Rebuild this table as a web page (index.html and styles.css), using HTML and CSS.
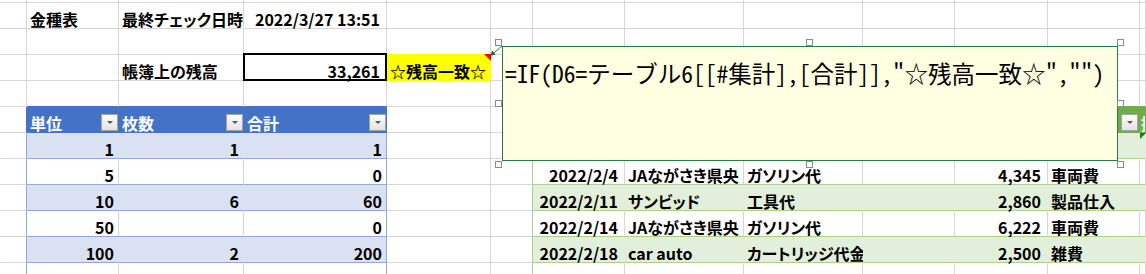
FILE: index.html
```html
<!DOCTYPE html>
<html lang="ja">
<head>
<meta charset="utf-8">
<title>金種表</title>
<link rel="stylesheet" href="styles.css">
</head>
<body>
<div class="sheet">
  <!-- row 0 (partial) -->
  <div class="c"></div><div class="c"></div><div class="c"></div><div class="c"></div><div class="c"></div><div class="c"></div><div class="c"></div><div class="c"></div><div class="c"></div><div class="c"></div><div class="c"></div><div class="c"></div><div class="c"></div>
  <!-- row 1 -->
  <div class="c"></div>
  <div class="c"><span>金種表</span></div>
  <div class="c"><span>最終チェック日時</span></div>
  <div class="c r r6"><span>2022/3/27 13:51</span></div>
  <div class="c"></div><div class="c"></div><div class="c"></div><div class="c"></div><div class="c"></div><div class="c"></div><div class="c"></div><div class="c"></div><div class="c"></div>
  <!-- row 2 -->
  <div class="c"></div><div class="c"></div><div class="c"></div><div class="c"></div>
  <div class="c yb"></div>
  <div class="c"></div><div class="c"></div><div class="c"></div><div class="c"></div><div class="c"></div><div class="c"></div><div class="c"></div><div class="c"></div>
  <!-- row 3 -->
  <div class="c"></div>
  <div class="c"></div>
  <div class="c"><span>帳簿上の残高</span></div>
  <div class="c r r6 bal"><span>33,261</span></div>
  <div class="c yel"><span>☆残高一致☆</span></div>
  <div class="c"></div><div class="c"></div><div class="c"></div><div class="c"></div><div class="c"></div><div class="c"></div><div class="c"></div><div class="c"></div>
  <!-- row 4 -->
  <div class="c"></div>
  <div class="c bt"></div><div class="c bt"></div><div class="c bt"></div>
  <div class="c"></div><div class="c"></div>
  <div class="c gt"></div><div class="c gt"></div><div class="c gt"></div><div class="c gt"></div><div class="c gt"></div><div class="c gt"></div><div class="c gt"></div>
  <!-- row 5: table headers -->
  <div class="c lah"></div>
  <div class="c bh"><span>単位</span><span class="dd"></span></div>
  <div class="c bh"><span>枚数</span><span class="dd"></span></div>
  <div class="c bh"><span>合計</span><span class="dd"></span></div>
  <div class="c"></div>
  <div class="c lgh"></div>
  <div class="c gh"><span>日付</span><span class="dd"></span></div>
  <div class="c gh"><span>支払先</span><span class="dd"></span></div>
  <div class="c gh"><span>内容</span><span class="dd"></span></div>
  <div class="c gh"><span>入金</span><span class="dd"></span></div>
  <div class="c gh"><span>出金</span><span class="dd"></span></div>
  <div class="c gh"><span>科目</span><span class="dd dd1"></span></div>
  <div class="c gh clip"><span>摘要</span></div>
  <!-- row 6 -->
  <div class="c la"></div>
  <div class="c bb r"><span>1</span></div>
  <div class="c bb r"><span>1</span></div>
  <div class="c bb bend r"><span>1</span></div>
  <div class="c"></div>
  <div class="c lg"></div>
  <div class="c gb"></div><div class="c gb"></div><div class="c gb"></div><div class="c gb"></div><div class="c gb"></div><div class="c gb"></div>
  <div class="c gb tri"></div>
  <!-- row 7 -->
  <div class="c la"></div>
  <div class="c bw r"><span>5</span></div>
  <div class="c bw"></div>
  <div class="c bw bend r"><span>0</span></div>
  <div class="c"></div>
  <div class="c lg"></div>
  <div class="c gw r r6"><span>2022/2/4</span></div>
  <div class="c gw"><span>JAながさき県央</span></div>
  <div class="c gw"><span>ガソリン代</span></div>
  <div class="c gw"></div>
  <div class="c gw r r6"><span>4,345</span></div>
  <div class="c gw"><span>車両費</span></div>
  <div class="c gw"></div>
  <!-- row 8 -->
  <div class="c la"></div>
  <div class="c bb r"><span>10</span></div>
  <div class="c bb r"><span>6</span></div>
  <div class="c bb bend r"><span>60</span></div>
  <div class="c"></div>
  <div class="c lg"></div>
  <div class="c gb r r6"><span>2022/2/11</span></div>
  <div class="c gb"><span>サンビッド</span></div>
  <div class="c gb"><span>工具代</span></div>
  <div class="c gb"></div>
  <div class="c gb r r6"><span>2,860</span></div>
  <div class="c gb"><span>製品仕入</span></div>
  <div class="c gb"></div>
  <!-- row 9 -->
  <div class="c la"></div>
  <div class="c bw r"><span>50</span></div>
  <div class="c bw"></div>
  <div class="c bw bend r"><span>0</span></div>
  <div class="c"></div>
  <div class="c lg"></div>
  <div class="c gw r r6"><span>2022/2/14</span></div>
  <div class="c gw"><span>JAながさき県央</span></div>
  <div class="c gw"><span>ガソリン代</span></div>
  <div class="c gw"></div>
  <div class="c gw r r6"><span>6,222</span></div>
  <div class="c gw"><span>車両費</span></div>
  <div class="c gw"></div>
  <!-- row 10 -->
  <div class="c la"></div>
  <div class="c bb r"><span>100</span></div>
  <div class="c bb r"><span>2</span></div>
  <div class="c bb bend r"><span>200</span></div>
  <div class="c"></div>
  <div class="c lg"></div>
  <div class="c gb r r6"><span>2022/2/18</span></div>
  <div class="c gb"><span>car auto</span></div>
  <div class="c gb"><span>カートリッジ代金</span></div>
  <div class="c gb"></div>
  <div class="c gb r r6"><span>2,500</span></div>
  <div class="c gb"><span>雑費</span></div>
  <div class="c gb"></div>
  <!-- row 11 -->
  <div class="c la"></div>
  <div class="c bw"></div><div class="c bw"></div><div class="c bw bend"></div>
  <div class="c"></div>
  <div class="c lg"></div>
  <div class="c gw"></div><div class="c gw"></div><div class="c gw"></div><div class="c gw"></div><div class="c gw"></div><div class="c gw"></div><div class="c gw"></div>

  <!-- comment overlay -->
  <svg class="connector" width="20" height="18" viewBox="0 0 20 18">
    <line x1="16" y1="4" x2="7" y2="11.5" stroke="#2f7d50" stroke-width="1"/>
    <polygon points="4,14 9.6,12.6 6.2,8.6" fill="#1d6b3c"/>
  </svg>
  <div class="comment"><p class="formula">=IF(D6=テーブル6[[#集計],[合計]],"☆残高一致☆","")</p></div>
  <div class="handles">
    <span class="h h-tl"></span><span class="h h-tm"></span><span class="h h-tr"></span>
    <span class="h h-ml"></span><span class="h h-mr"></span>
    <span class="h h-bl"></span><span class="h h-bm"></span><span class="h h-br"></span>
  </div>
</div>
</body>
</html>
```

FILE: styles.css
```css
html, body {
  margin: 0;
  padding: 0;
  background: #fff;
}
body {
  width: 1146px;
  height: 274px;
  overflow: hidden;
  font-family: "Noto Sans CJK JP", sans-serif;
}
.sheet {
  position: relative;
  width: 1146px;
  height: 274px;
  overflow: hidden;
  display: grid;
  grid-template-columns: 27px 92px 125px 143px 104px 42px 92px 119px 119px 92px 93px 92px 1fr;
  grid-template-rows: 3px repeat(11, 26px);
  font-size: 16px;
  font-weight: 700;
  color: #000;
  font-feature-settings: "palt";
}
.c {
  box-sizing: border-box;
  min-width: 0;
  border-right: 1px solid #d6d6d6;
  border-bottom: 1px solid #d6d6d6;
  display: flex;
  align-items: flex-end;
  padding: 0 0 0 3px;
  line-height: 18px;
  white-space: nowrap;
}
.clip { overflow: hidden; }
.r {
  justify-content: flex-end;
  padding-left: 0;
  padding-right: 4px;
}
.r6 { padding-right: 6px; }

/* balance cell with thick border */
.bal { position: relative; }
.bal::after {
  content: "";
  position: absolute;
  left: -1px;
  right: -1px;
  top: -2px;
  bottom: -1px;
  border: 2px solid #000;
}
.yb { border-bottom-color: #ffff00; }
.yel {
  position: relative;
  background: #ffff00;
  border-right-color: #ffff00;
  border-bottom-color: #ffff00;
}
.yel::after {
  content: "";
  position: absolute;
  right: -1px;
  top: -1px;
  width: 0;
  height: 0;
  border-top: 7px solid #ff0000;
  border-left: 7px solid transparent;
}

/* blue table */
.bt { border-bottom-color: #4472c4; }
.bh {
  background: #4472c4;
  color: #fff;
  border-color: #4472c4;
  padding-right: 0;
}
.bb {
  background: #d9e1f2;
  border-right-color: #d9e1f2;
  border-bottom-color: #8ea9db;
}
.bw { border-bottom-color: #8ea9db; }
.bend { border-right-color: #8ea9db; }
.lah { border-right-color: #4472c4; }
.la { border-right-color: #8ea9db; }

/* green table */
.gt { border-bottom-color: #70ad47; }
.gh {
  background: #70ad47;
  color: #fff;
  border-color: #70ad47;
  padding-right: 0;
  padding-left: 1px;
}
.gb {
  background: #e2efda;
  border-right-color: #e2efda;
  border-bottom-color: #a9d08e;
}
.gw { border-bottom-color: #a9d08e; }
.lgh { border-right-color: #70ad47; }
.lg { border-right-color: #a9d08e; }
.tri { position: relative; }
.tri::before {
  content: "";
  position: absolute;
  left: 0;
  top: 0;
  width: 0;
  height: 0;
  border-top: 6px solid #12801e;
  border-right: 6px solid transparent;
}

/* filter dropdown button */
.dd {
  flex: none;
  margin-left: auto;
  margin-bottom: 1px;
  width: 17px;
  height: 17px;
  box-sizing: border-box;
  border: 1px solid #a3a3a3;
  background: linear-gradient(#fdfdfd, #e3e3e3);
  display: flex;
  align-items: center;
  justify-content: center;
}
.dd1 { margin-right: 1px; }
.dd::after {
  content: "";
  width: 0;
  height: 0;
  border-left: 3px solid transparent;
  border-right: 3px solid transparent;
  border-top: 3px solid #555;
}

/* comment box */
.connector {
  position: absolute;
  left: 486px;
  top: 42px;
}
.comment {
  position: absolute;
  left: 502px;
  top: 46px;
  width: 616px;
  height: 115px;
  box-sizing: border-box;
  border: 1px solid #2b7a4b;
  background: #ffffe1;
  padding: 11px 0 0 2px;
  font-family: "Noto Sans Mono CJK JP", "DejaVu Sans Mono", "Noto Sans CJK JP", monospace;
  font-weight: 400;
  font-size: 23.5px;
  line-height: 30px;
  font-feature-settings: normal;
  color: #000;
  white-space: nowrap;
}
.formula { margin: 0; }
.handles {
  position: absolute;
  left: 495px;
  top: 39px;
  width: 629px;
  height: 129px;
}
.h {
  position: absolute;
  width: 7px;
  height: 7px;
  box-sizing: border-box;
  border: 1px solid #8a8a8a;
  background: #fff;
}
.h-tl { left: 0; top: 0; }
.h-tm { left: 311px; top: 0; }
.h-tr { left: 622px; top: 0; }
.h-ml { left: 0; top: 61px; }
.h-mr { left: 622px; top: 61px; }
.h-bl { left: 0; top: 122px; }
.h-bm { left: 311px; top: 122px; }
.h-br { left: 622px; top: 122px; }
```
